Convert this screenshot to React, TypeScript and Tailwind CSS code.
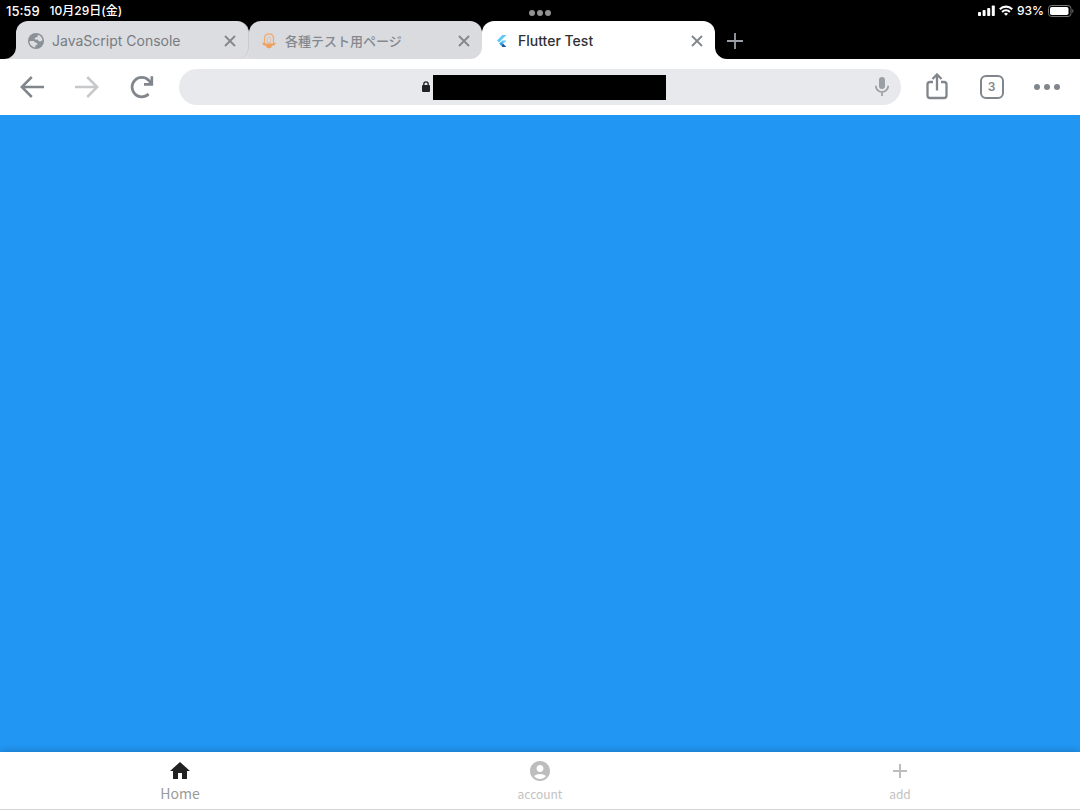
import React, { useState } from "react";
import { MdAccountCircle, MdAdd, MdHome } from "react-icons/md";

function GlobeIcon() {
  return (
    <svg viewBox="0 0 16 16" className="h-4 w-4" aria-hidden="true">
      <circle cx="8" cy="8" r="8" fill="#8b9096" />
      <path
        d="M9.800 1.800 C12.400 2.400 14.200 4.600 14.500 7.200 L12.400 8.600 L10.800 8.200 L9.600 6.400 L7.600 6.800 L6.400 5.600 L8 4.200 L9.600 3.800 Z"
        fill="#dcdde1"
      />
      <path
        d="M1.500 8 L5.600 8 L7.400 9.400 L9.400 10.200 L9.200 11.800 L7.400 12.400 L7.200 14.500 C4 14 1.500 11.400 1.500 8 Z"
        fill="#dcdde1"
      />
    </svg>
  );
}

function RocketIcon() {
  return (
    <svg viewBox="0 0 16 16" className="h-4 w-4" fill="none" aria-hidden="true">
      <path d="M3.500 11 V5.500 C3.500 2.500 5.500 .8 8 .8 S12.500 2.500 12.500 5.500 V11" stroke="#f0ab72" strokeWidth="1.300" />
      <path d="M6.300 9.500 V5.800 C6.300 4.700 7 4.100 8 4.100 S9.700 4.700 9.700 5.800 V9.500 Z" stroke="#dfb799" strokeWidth=".8" />
      <path d="M1 9.400 L4.500 10.400 H11.500 L15 9.400 L13.400 12.600 L11 12.400 L10.400 14.400 L8 15.400 L5.600 14.400 L5 12.400 L2.600 12.600 Z" fill="#ee9f5c" />
    </svg>
  );
}

function FlutterIcon() {
  return (
    <svg viewBox="0 0 16 16" className="h-4 w-4" aria-hidden="true">
      <path d="M8.400 2 H12.400 L5 9.400 L3 7.500 Z" fill="#5ec8f8" />
      <path d="M8.400 7.400 H12.400 L9.100 10.700 L7.100 8.900 Z" fill="#5ec8f8" />
      <path d="M5.200 10.700 L7.200 8.800 L9.100 10.700 L7.200 12.600 Z" fill="#2f9fe0" />
      <path d="M7.200 12.600 L9.100 10.700 L12.400 14 H8.600 Z" fill="#12589c" />
    </svg>
  );
}

function CloseIcon() {
  return (
    <svg viewBox="0 0 12 12" className="h-3 w-3" stroke="currentColor" strokeWidth="1.900" aria-hidden="true">
      <path d="M1 1 L11 11 M11 1 L1 11" />
    </svg>
  );
}

type TabInfo = {
  title: string;
  icon: React.ReactNode;
  wrapper: string;
  surface: string;
  text: string;
};

const tabs: TabInfo[] = [
  {
    title: "JavaScript Console",
    icon: <GlobeIcon />,
    wrapper: "bg-linear-to-b from-black from-50% to-[#dcdde1] to-50%",
    surface: "rounded-xl rounded-bl-none border-r border-[#c9cbcf] bg-[#dcdde1]",
    text: "text-[14px] text-[#777c82]",
  },
  {
    title: "各種テスト用ページ",
    icon: <RocketIcon />,
    wrapper: "bg-linear-to-b from-black from-50% to-white to-50%",
    surface: "rounded-xl rounded-bl-none bg-[#dadbdf]",
    text: "text-[13px] font-medium text-[#85898e]",
  },
  {
    title: "Flutter Test",
    icon: <FlutterIcon />,
    wrapper: "",
    surface: "rounded-t-xl bg-white",
    text: "text-[14px] font-medium text-[#303134]",
  },
];

function StatusBar() {
  return (
    <header className="grid h-[21px] grid-cols-3 items-center px-1.5 text-[12px] font-medium leading-4 text-white">
      <div className="flex items-center gap-2.5">
        <span className="text-[13px]">15:59</span>
        <span>10月29日(金)</span>
      </div>
      <div className="flex justify-center gap-0.5 pt-1">
        <i className="h-1.5 w-1.5 rounded-full bg-[#929292]" />
        <i className="h-1.5 w-1.5 rounded-full bg-[#929292]" />
        <i className="h-1.5 w-1.5 rounded-full bg-[#929292]" />
      </div>
      <div className="flex items-center justify-end gap-1">
        <svg viewBox="0 0 17 11" className="h-[11px] w-[17px]" fill="white" aria-label="Signal">
          <rect x="0" y="7" width="3" height="4" rx=".8" />
          <rect x="4.600" y="5" width="3" height="6" rx=".8" />
          <rect x="9.200" y="3" width="3" height="8" rx=".8" />
          <rect x="13.800" y="0.500" width="3" height="10.500" rx=".8" />
        </svg>
        <svg viewBox="0 0 14 11" className="h-[11px] w-3.5" fill="none" stroke="white" strokeWidth="2.100" aria-label="Wi-Fi">
          <path d="M.8 4.200 A8.800 8.800 0 0 1 13.200 4.200" />
          <path d="M3.100 6.900 A5.500 5.500 0 0 1 10.900 6.900" />
          <path d="M7 10.800 L5 8.800 A2.900 2.900 0 0 1 9 8.800 Z" fill="white" stroke="none" />
        </svg>
        <span>93%</span>
        <svg viewBox="0 0 26 12" className="h-3 w-[26px]" aria-label="Battery">
          <rect x=".5" y=".5" width="22.500" height="11" rx="3" fill="none" stroke="#777777" />
          <rect x="2" y="2" width="18.500" height="8" rx="1.800" fill="white" />
          <path d="M24.300 4 C25.800 4.600 25.800 7.400 24.300 8 Z" fill="#777777" />
        </svg>
      </div>
    </header>
  );
}

function TabStrip({ active, onSelect }: { active: number; onSelect: (index: number) => void }) {
  return (
    <div className="flex h-[38px] pl-1">
      <svg viewBox="0 0 12 12" className="h-3 w-3 shrink-0 self-end" fill="#dcdde1" aria-hidden="true">
        <path d="M12 0 V12 H0 A12 12 0 0 0 12 0 Z" />
      </svg>
      {tabs.map((tab, index) => (
        <div key={tab.title} className={`w-[233px] min-w-0 ${tab.wrapper}`}>
          <div className={`flex h-full items-center pt-0.5 pr-3 pl-3 ${tab.surface}`}>
            <button
              type="button"
              aria-pressed={active === index}
              onClick={() => onSelect(index)}
              className={`flex min-w-0 flex-1 items-center gap-2 text-left leading-5 ${tab.text}`}
            >
              <span className="shrink-0">{tab.icon}</span>
              <span className="truncate">{tab.title}</span>
            </button>
            <button type="button" aria-label={`Close ${tab.title}`} className="shrink-0 text-[#83888e]">
              <CloseIcon />
            </button>
          </div>
        </div>
      ))}
      <svg viewBox="0 0 12 12" className="h-3 w-3 shrink-0 self-end" fill="white" aria-hidden="true">
        <path d="M0 0 V12 H12 A12 12 0 0 1 0 0 Z" />
      </svg>
      <button type="button" aria-label="New tab" className="shrink-0 pt-0.5 text-[#9aa0a6]">
        <svg viewBox="0 0 16 16" className="h-4 w-4" stroke="currentColor" strokeWidth="1.800" aria-hidden="true">
          <path d="M8 0 V16 M0 8 H16" />
        </svg>
      </button>
    </div>
  );
}

function ToolButton({ label, disabled, children }: { label: string; disabled?: boolean; children: React.ReactNode }) {
  return (
    <button
      type="button"
      aria-label={label}
      disabled={disabled}
      className="flex w-[55px] shrink-0 items-center justify-center self-stretch text-[#80868b] disabled:text-[#c6c8ca]"
    >
      {children}
    </button>
  );
}

function Toolbar() {
  return (
    <div className="flex h-14 items-center bg-white pr-1.5 pl-1">
      <ToolButton label="Back">
        <svg viewBox="0 0 24 22" className="h-[22px] w-6" fill="none" stroke="currentColor" strokeWidth="2.500" aria-hidden="true">
          <path d="M24 11 H2 M11.800 1 L1.800 11 L11.800 21" />
        </svg>
      </ToolButton>
      <ToolButton label="Forward" disabled>
        <svg viewBox="0 0 24 22" className="h-[22px] w-6" fill="none" stroke="currentColor" strokeWidth="2.500" aria-hidden="true">
          <path d="M0 11 H22 M12.200 1 L22.200 11 L12.200 21" />
        </svg>
      </ToolButton>
      <ToolButton label="Reload">
        <svg viewBox="0 0 24 24" className="h-6 w-6" fill="none" stroke="currentColor" strokeWidth="2.700" aria-hidden="true">
          <path d="M18.600 19 A9.700 9.700 0 1 1 18.600 5.200 L21 8" />
          <path d="M21.800 1.200 V9.300 H14" />
        </svg>
      </ToolButton>
      <div className="mr-2 ml-2.5 flex h-9 min-w-0 flex-1 items-center rounded-full bg-[#e8e9ed] px-3">
        <div className="flex min-w-0 flex-1 items-center justify-center gap-[3px] pl-[21px]">
          <svg viewBox="0 0 8 12" className="h-3 w-2 shrink-0" aria-hidden="true">
            <rect x="0" y="4" width="8" height="7" rx="1" fill="#202124" />
            <path d="M1.800 4.500 V3 A2.200 2.200 0 0 1 6.200 3 V4.500" fill="none" stroke="#202124" strokeWidth="1.300" />
          </svg>
          <input
            type="text"
            aria-label="Address"
            className="h-[25px] w-[233px] min-w-0 bg-black px-1 text-[14px] text-black outline-none"
          />
        </div>
        <button type="button" aria-label="Voice search" className="shrink-0 text-[#9a9ea5]">
          <svg viewBox="0 0 14 20" className="block h-5 w-3.5" aria-hidden="true">
            <rect x="4" y="0" width="6" height="12" rx="3" fill="currentColor" />
            <path d="M.8 8.800 A6.200 6.200 0 0 0 13.200 8.800 M7 15 V19" fill="none" stroke="currentColor" strokeWidth="1.700" />
          </svg>
        </button>
      </div>
      <ToolButton label="Share">
        <svg viewBox="0 0 22 28" className="h-7 w-[22px]" fill="none" stroke="currentColor" strokeWidth="2.300" aria-hidden="true">
          <path d="M7 9 H4 C2.200 9 1.500 10 1.500 11.500 V22.500 C1.500 24.200 2.300 25 4 25 H18 C19.700 25 20.500 24.200 20.500 22.500 V11.500 C20.500 10 19.800 9 18 9 H15" />
          <path d="M11 17.500 V2 M6.500 6 L11 1.500 L15.500 6" />
        </svg>
      </ToolButton>
      <ToolButton label="Tabs">
        <span className="flex h-6 w-6 items-center justify-center rounded-md border-2 border-current text-[12px] font-semibold leading-4">
          3
        </span>
      </ToolButton>
      <ToolButton label="More">
        <svg viewBox="0 0 26 6" className="h-1.5 w-[26px]" fill="currentColor" aria-hidden="true">
          <circle cx="3" cy="3" r="3" />
          <circle cx="13" cy="3" r="3" />
          <circle cx="23" cy="3" r="3" />
        </svg>
      </ToolButton>
    </div>
  );
}

const destinations = [
  { label: "Home", Icon: MdHome },
  { label: "account", Icon: MdAccountCircle },
  { label: "add", Icon: MdAdd },
];

function BottomNav() {
  const [current, setCurrent] = useState("Home");
  return (
    <nav className="relative flex h-[58px] border-b border-[#d5d5d5] bg-white font-['Noto_Sans_CJK_JP','Noto_Sans',sans-serif] shadow-[0_0_8px_rgba(0,0,0,0.25)]">
      {destinations.map(({ label, Icon }) => {
        const selected = current === label;
        return (
          <button
            key={label}
            type="button"
            aria-current={selected ? "page" : undefined}
            onClick={() => setCurrent(label)}
            className="flex flex-1 flex-col items-center pt-[7px]"
          >
            <Icon className={selected ? "h-6 w-6 text-[#212121]" : "h-6 w-6 text-[#bdbdbd]"} />
            <span className={selected ? "text-[14px] leading-5 text-[#9a9a9a]" : "text-[12px] leading-[22px] text-[#c2c2c2]"}>
              {label}
            </span>
          </button>
        );
      })}
    </nav>
  );
}

export default function App() {
  const [active, setActive] = useState(2);
  return (
    <div className="flex min-h-screen flex-col bg-black font-['Inter','Noto_Sans_CJK_JP',sans-serif]">
      <StatusBar />
      <TabStrip active={active} onSelect={setActive} />
      <Toolbar />
      <main className="flex-1 bg-[#2196f3]" />
      <BottomNav />
    </div>
  );
}
